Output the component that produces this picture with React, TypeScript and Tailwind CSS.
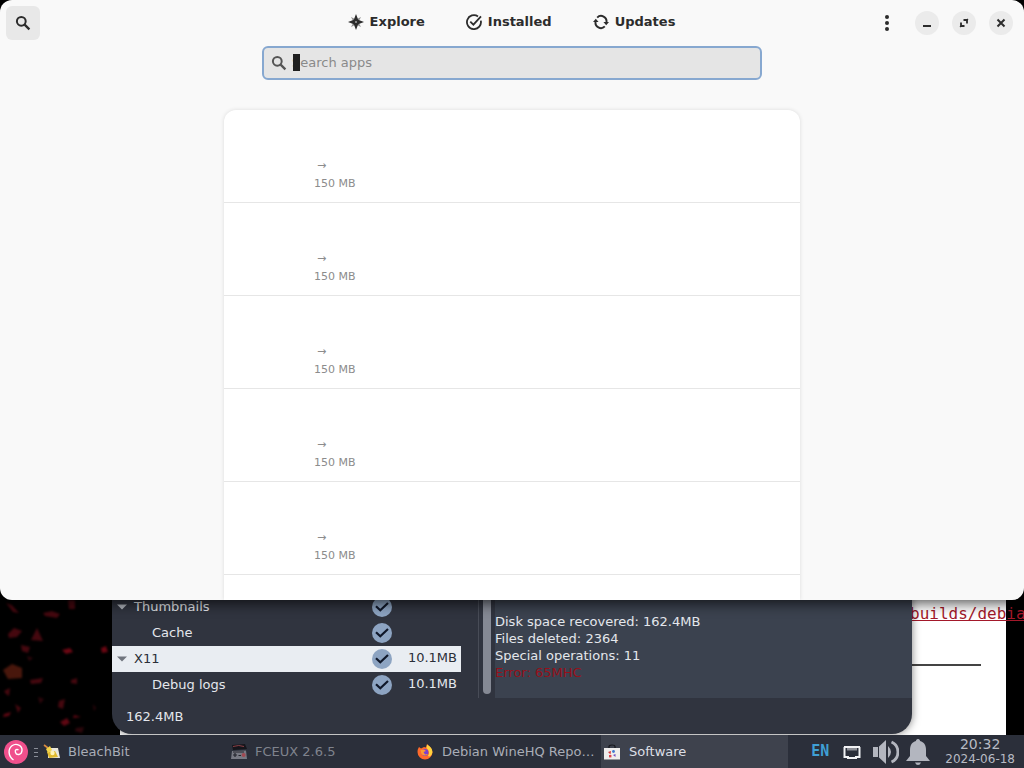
import { useState } from "react";

interface CleanerRow {
    id: string;
    label: string;
    size?: string;
    child?: boolean;
    selected?: boolean;
}

interface Task {
    title: string;
    icon: React.ReactNode;
    state: "normal" | "dimmed" | "active";
}

const updates = [1, 2, 3, 4, 5].map((id) => ({ id, version: "→", size: "150 MB" }));

const cleaners: CleanerRow[] = [
    { id: "thumbnails", label: "Thumbnails" },
    { id: "cache", label: "Cache", child: true },
    { id: "x11", label: "X11", size: "10.1MB", selected: true },
    { id: "debug-logs", label: "Debug logs", size: "10.1MB", child: true }
];

function SearchIcon({ className }: { className: string }) {
    return (
        <svg className={className} viewBox="0 0 16 16" fill="none" stroke="currentColor" strokeWidth="2">
            <circle cx="6.3" cy="6.3" r="4.4" />
            <path d="M9.6 9.6 14.4 14.4" strokeWidth="2.3" />
        </svg>
    );
}

function ExploreIcon() {
    return (
        <svg className="size-4" viewBox="0 0 16 16" fill="currentColor">
            <path d="M8 0 10 5.2Q10.400 5.600 10.800 6L16 8 10.8 10Q10.4 10.4 10 10.800L8 16 6 10.800Q5.600 10.400 5.200 10L0 8 5.200 6Q5.600 5.600 6 5.200Z" />
            <path d="M3 3 8 5.6 13 3 10.4 8 13 13 8 10.4 3 13 5.6 8Z" opacity="0.5" />
            <circle cx="8" cy="8" r="0.8" fill="#f9f9f9" />
        </svg>
    );
}

function InstalledIcon() {
    return (
        <svg className="size-4" viewBox="0 0 16 16" fill="none" stroke="currentColor" strokeWidth="1.8">
            <path d="M12 2.4A7 7 0 1 0 14.8 6.6" />
            <path d="M4.3 7.6 7.4 10.6 15 2.4" />
        </svg>
    );
}

function UpdatesIcon() {
    return (
        <svg className="size-4" viewBox="0 0 16 16" fill="none" stroke="currentColor" strokeWidth="1.9">
            <path d="M4.2 3.6A5.4 5.4 0 0 1 13.4 8.4" />
            <path d="M11.8 12.4A5.4 5.4 0 0 1 2.6 7.6" />
            <path d="M10.4 8H16L13.2 11.2Z M0 8H5.6L2.8 4.8Z" fill="currentColor" stroke="none" />
        </svg>
    );
}

function SoftwareWindow() {
    const [query, setQuery] = useState("");

    return (
        <section className="relative z-10 flex h-[600px] flex-col overflow-hidden rounded-xl bg-[#f9f9f9] text-[#2c2c2c] shadow-[0_3px_14px_rgba(0,0,0,0.7)]">
            <header className="grid h-[46px] shrink-0 grid-cols-[1fr_auto_1fr] items-center pr-[11px] pl-1.5">
                <button
                    type="button"
                    aria-label="Search"
                    className="flex size-[34px] items-center justify-center rounded-md bg-[#e8e8e8]"
                >
                    <SearchIcon className="size-4" />
                </button>
                <nav className="flex items-center gap-[41px] pb-0.5 pl-1 font-bold">
                    <button type="button" className="flex items-center gap-1.5">
                        <ExploreIcon />
                        Explore
                    </button>
                    <button type="button" className="flex items-center gap-1.5">
                        <InstalledIcon />
                        Installed
                    </button>
                    <button type="button" className="flex items-center gap-1.5">
                        <UpdatesIcon />
                        Updates
                    </button>
                </nav>
                <div className="flex items-center justify-end gap-[13px]">
                    <button type="button" aria-label="Menu" className="flex w-[30px] justify-center">
                        <svg className="h-4 w-1" viewBox="0 0 4 16" fill="currentColor">
                            <circle cx="2" cy="2" r="2" />
                            <circle cx="2" cy="8" r="2" />
                            <circle cx="2" cy="14" r="2" />
                        </svg>
                    </button>
                    <button
                        type="button"
                        aria-label="Minimize"
                        className="flex size-6 items-center justify-center rounded-full bg-[#ebebeb]"
                    >
                        <svg className="size-4" viewBox="0 0 16 16" fill="currentColor">
                            <rect x="4" y="10" width="8" height="2" />
                        </svg>
                    </button>
                    <button
                        type="button"
                        aria-label="Restore"
                        className="flex size-6 items-center justify-center rounded-full bg-[#ebebeb]"
                    >
                        <svg className="size-4" viewBox="0 0 16 16" fill="none" stroke="currentColor" strokeWidth="1.8">
                            <path d="M7.5 5H11V8.5 M5 7.5V11H8.5" />
                            <path d="M10 6 12 4 M6 10 4 12" strokeWidth="1.2" />
                        </svg>
                    </button>
                    <button
                        type="button"
                        aria-label="Close"
                        className="flex size-6 items-center justify-center rounded-full bg-[#ebebeb]"
                    >
                        <svg className="size-4" viewBox="0 0 16 16" fill="none" stroke="currentColor" strokeWidth="2">
                            <path d="M4.5 4.5 11.5 11.5 M11.5 4.5 4.5 11.5" />
                        </svg>
                    </button>
                </div>
            </header>

            <div className="mx-auto w-full max-w-[500px] shrink-0">
                <label className="flex h-[34px] items-center rounded-md border-2 border-[#87a8d0] bg-[#e5e5e5] pb-px pl-[7px] text-[#555]">
                    <SearchIcon className="size-4" />
                    {/* block cursor sits on top of the first letter */}
                    <span className="z-10 ml-1.5 h-[17px] w-[7px] bg-[#1f1f1f]" />
                    <input
                        type="text"
                        aria-label="Search apps"
                        placeholder="Search apps"
                        value={query}
                        onChange={(e) => setQuery(e.target.value)}
                        className="-ml-2 min-w-0 flex-1 bg-transparent text-[#2c2c2c] caret-transparent outline-none placeholder:text-[#8a8a8a]"
                    />
                </label>
            </div>

            <ul className="mx-auto mt-[30px] w-full max-w-[576px] flex-1 rounded-t-xl bg-white shadow-[0_0_4px_rgba(0,0,0,0.12)]">
                {updates.map((update) => (
                    <li
                        key={update.id}
                        className="border-b border-[#e6e6e6] pt-[47px] pb-[9px] pl-[90px] text-[11px] leading-[18px] text-[#8c8c8c]"
                    >
                        <p className="pl-[3px]">{update.version}</p>
                        <p>{update.size}</p>
                    </li>
                ))}
            </ul>
        </section>
    );
}

function CleanerItem({ row }: { row: CleanerRow }) {
    const [checked, setChecked] = useState(true);

    return (
        <li
            className={`flex h-[26px] items-center pr-1 pl-[5px] ${row.selected ? "bg-[#e9edf2] text-[#2b2f38]" : ""}`}
        >
            {row.child ? (
                <span className="w-[35px]" />
            ) : (
                <svg
                    className={`mr-[7px] h-1.5 w-2.5 ${row.selected ? "text-[#70757e]" : "text-[#b0b4bc]"}`}
                    viewBox="0 0 10 6"
                    fill="currentColor"
                >
                    <path d="M0 0.5H10L5 5.5Z" />
                </svg>
            )}
            <label htmlFor={row.id} className="flex-1">
                {row.label}
            </label>
            <span className="grid size-5 place-items-center">
                <input
                    id={row.id}
                    type="checkbox"
                    checked={checked}
                    onChange={() => setChecked(!checked)}
                    className="peer col-start-1 row-start-1 size-5 appearance-none rounded-full bg-[#8da4c2]"
                />
                <svg
                    className="pointer-events-none col-start-1 row-start-1 hidden size-5 peer-checked:block"
                    viewBox="0 0 20 20"
                    fill="none"
                    stroke="#10182a"
                    strokeWidth="2.2"
                >
                    <path d="M4 9.2 8.3 13.2 16 6" />
                </svg>
            </span>
            <span className="w-[65px] pb-0.5 text-right">{row.size}</span>
        </li>
    );
}

function BleachBitWindow() {
    return (
        <section className="absolute bottom-px left-28 w-[800px] overflow-hidden rounded-b-[20px] bg-[#30343f] text-[#e4e7ec] shadow-[0_0_8px_rgba(0,0,0,0.5)]">
            <div className="flex">
                <ul className="w-[349px]">
                    {cleaners.map((row) => (
                        <CleanerItem key={row.id} row={row} />
                    ))}
                </ul>
                <div className="ml-[17px] w-px bg-[#484c57]" />
                <div className="mb-1 ml-1 w-2 rounded-b-full bg-[#858994]" />
                <div className="ml-1 flex-1 bg-[#3b424f] pt-[19px] leading-[17px]">
                    <p>Disk space recovered: 162.4MB</p>
                    <p>Files deleted: 2364</p>
                    <p>Special operations: 11</p>
                    <p className="text-[#96101a]">Error: 65MHC</p>
                </div>
            </div>
            <footer className="h-9 pl-3.5 leading-[38px]">162.4MB</footer>
        </section>
    );
}

function BrowserWindow() {
    return (
        <section className="absolute inset-y-0 right-[18px] left-[120px] bg-white">
            <p className="absolute bottom-[111px] left-[790px] font-['DejaVu_Sans_Mono',monospace] text-base leading-5 whitespace-nowrap">
                <a href="#builds" className="text-[#a3182a] underline">
                    builds/debia
                </a>
            </p>
            <hr className="absolute right-[25px] bottom-[69px] w-96 border-t-2 border-[#444]" />
        </section>
    );
}

function Wallpaper() {
    return (
        <svg className="absolute bottom-0 left-0 h-[135px] w-28 blur-[1px]" viewBox="0 0 112 135" fill="#45080f">
            <path d="M6 3 12 5 19 13 13 12Z M68 0H75V9H69Z M43 13 52 11 60 14 57 18 45 16Z" />
            <path d="M8 34 14 28 22 31 17 37 9 38Z M31 40 37 28 43 41Z M21 45 30 47 28 53 22 51Z" />
            <path d="M3 70 12 64 22 68 22 78 8 79Z" fill="#48170c" />
            <path d="M62 50 70 48 73 52 66 54Z M101 48 106 46 108 52 102 53Z" fill="#6b0713" />
            <path d="M30 80 43 78 41 83 31 84Z M71 80 77 78 77 84 71 83Z" />
            <path d="M4 91 10 88 9 96 6 94Z M59 101 65 99 63 109 58 107Z M15 104 21 108 18 113Z" />
            <path d="M4 114 11 112 9 116 3 117Z M60 122 67 118 70 123 64 126Z M74 115 81 117 73 118Z" fill="#5e0712" />
            <path d="M76 128 84 127 82 133 75 131Z M93 104 96 108 94 111Z M27 56 33 58 29 61Z M38 97 44 99 40 104Z" fill="#2c060b" />
        </svg>
    );
}

function BleachBitIcon() {
    return (
        <svg className="size-[18px]" viewBox="0 0 18 18">
            <path d="M5 5 15 5 17 15 5 15Z" fill="#e8e6dc" />
            <path d="M4 9 12 8 15 14 6 15Z" fill="#e0b92d" />
            <path d="M1 2 5 5" stroke="#d98b3f" strokeWidth="1.6" />
            <path d="M3 6 7 3 9 7 5 10Z" fill="#f3d44a" />
            <circle cx="9.5" cy="10" r="2.2" fill="#fff3b4" />
        </svg>
    );
}

function FceuxIcon() {
    return (
        <svg className="size-[18px]" viewBox="0 0 18 18">
            <path d="M2 2 15 1 17 6 3 7Z" fill="#15151b" />
            <path d="M3 3.5Q9 1.5 14 3.5" stroke="#8b4046" fill="none" />
            <path d="M2 8 16 7.5 17 16H1Z" fill="#777983" />
            <path d="M3 12H7 M5 10V14 M8.5 12.5H11 M3 9H14" stroke="#24252d" strokeWidth="1.2" />
            <circle cx="13.6" cy="12" r="2" fill="#a04a53" />
        </svg>
    );
}

function FirefoxIcon() {
    return (
        <svg className="size-4" viewBox="0 0 16 16">
            <path d="M2 3 4 4.5 7 3 9 3.5 10 0 14 4 15.5 8A7.5 7.5 0 0 1 .5 8C.5 6 1 4.5 2 3Z" fill="#ff6a2b" />
            <path d="M10 .5C14 3 15.5 5 15.4 8.5 14.5 12.5 12 13 11 12 13.5 8 11 6 9.5 4Z" fill="#ffd23e" />
            <circle cx="8" cy="8.5" r="3.4" fill="#7a3fd0" />
            <path d="M3.5 6 7 5.5 9 7 6.5 8 8 10.5 11 10A4 4 0 0 1 4.3 9.5Z" fill="#ff9a2e" />
        </svg>
    );
}

function SoftwareIcon() {
    return (
        <svg className="size-4" viewBox="0 0 16 16">
            <path d="M5 4V2.5Q5 1 8 1T11 2.5V4" fill="none" stroke="#17181d" strokeWidth="1.2" />
            <path d="M0 4H16V15.5H0Z" fill="#efedec" />
            <path d="M4 8 7 7 6.5 10.5Z" fill="#d63a3f" />
            <circle cx="9.5" cy="7.5" r="1.4" fill="#3e78cf" />
            <rect x="5" y="11" width="2.4" height="2.4" fill="#e0434b" />
            <path d="M9 11 11.5 10 11.5 13Z" fill="#704ac0" />
        </svg>
    );
}

const tasks: Task[] = [
    { title: "BleachBit", icon: <BleachBitIcon />, state: "normal" },
    { title: "FCEUX 2.6.5", icon: <FceuxIcon />, state: "dimmed" },
    { title: "Debian WineHQ Repo…", icon: <FirefoxIcon />, state: "normal" },
    { title: "Software", icon: <SoftwareIcon />, state: "active" }
];

const taskStyles = {
    normal: "text-[#a9adb7]",
    dimmed: "text-[#7f838d]",
    active: "bg-[#3e424d] text-[#dcdfe5]"
};

function Taskbar() {
    return (
        <footer className="relative z-20 flex h-[33px] items-stretch bg-[#2b2f3a]">
            <button type="button" aria-label="Applications" className="ml-1 flex items-center">
                <svg className="size-6" viewBox="0 0 24 24" fill="none">
                    <circle cx="12" cy="12" r="12" fill="#f0508c" />
                    <path
                        d="M9.5 20C4 16 3.8 9 8 5.8S18.5 5.5 18 10.5 12.5 15.5 11.5 12.5 13 9 14.5 9.8"
                        stroke="#fff"
                        strokeWidth="1.4"
                    />
                </svg>
            </button>
            <svg className="mr-0.5 ml-1.5 h-2.5 w-1 self-center" viewBox="0 0 4 10" stroke="#8a8e98">
                <path d="M0 1.5H4 M0 5.5H4 M0 9.5H4" />
            </svg>
            <div className="flex min-w-0 flex-1">
                {tasks.map((task) => (
                    <button
                        key={task.title}
                        type="button"
                        className={`flex max-w-[187px] min-w-0 flex-1 items-center gap-[7px] pl-[3px] ${taskStyles[task.state]}`}
                    >
                        <span className="w-[18px] shrink-0">{task.icon}</span>
                        <span className="truncate">{task.title}</span>
                    </button>
                ))}
            </div>
            <div className="flex items-center pr-[9px]">
                <span className="font-['DejaVu_Sans_Mono',monospace] text-[15px] font-bold text-[#3f9fd4]">EN</span>
                <svg className="ml-3.5 h-4 w-[18px]" viewBox="0 0 18 16" fill="none" stroke="#f2f3f5">
                    <path d="M1.5 3V13H5V14H13V13H16.5V3" strokeWidth="2" />
                    <path d="M1 3H17" strokeWidth="2" />
                    <path d="M5 4V6.5 M7 4V6.5 M9 4V6.5 M11 4V6.5 M13 4V6.5" />
                </svg>
                <svg className="ml-3 h-[26px] w-[26px]" viewBox="0 0 26 26" fill="#b3b6bf">
                    <path d="M0 8H5V18H0Z M6 7.5 13 1V25L6 18.5Z" />
                    <path d="M15 7Q21 13 15 19Z" />
                    <path d="M18.5 3A11 11 0 0 1 18.5 23" fill="none" stroke="#b3b6bf" strokeWidth="2.8" />
                </svg>
                <svg className="ml-1.5 size-[26px]" viewBox="0 0 26 26" fill="#b3b6bf">
                    <path d="M13 0C14.5 0 15 1 15 2 19 3 21 6 21 11V17L25 22H1L5 17V11C5 6 7 3 11 2 11 1 11.5 0 13 0Z" />
                    <path d="M10 23.5H16Q15 26 13 26T10 23.5Z" />
                </svg>
                <time className="ml-3.5 text-center text-[#b8bbc4]">
                    <span className="block text-sm leading-[15px]">20:32</span>
                    <span className="block text-xs leading-[15px]">2024-06-18</span>
                </time>
            </div>
        </footer>
    );
}

function App() {
    return (
        <main className="flex h-screen flex-col overflow-hidden bg-black font-['DejaVu_Sans',sans-serif] text-[13px]">
            <div className="relative min-h-0 flex-1">
                <Wallpaper />
                <BrowserWindow />
                <BleachBitWindow />
                <SoftwareWindow />
            </div>
            <Taskbar />
        </main>
    );
}

export default App;
